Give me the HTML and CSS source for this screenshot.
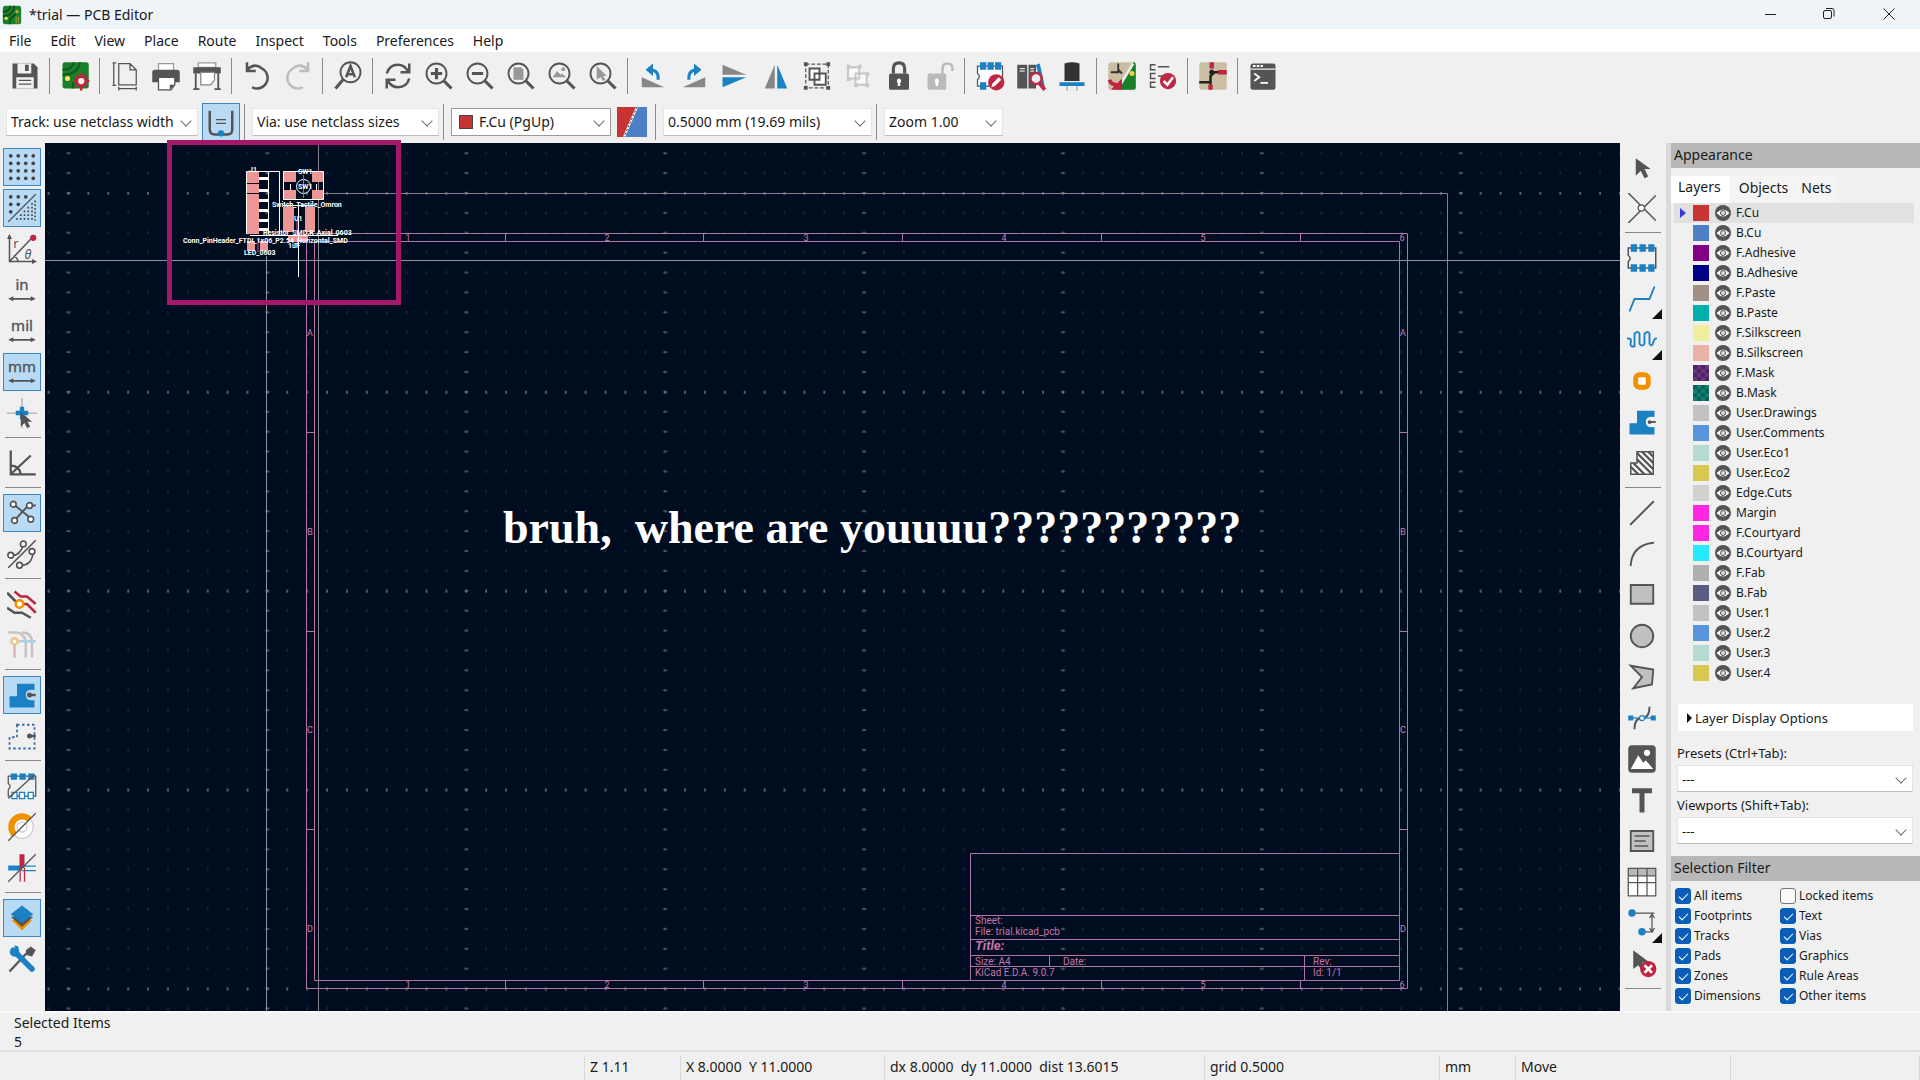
FILE: index.html
```html
<!DOCTYPE html>
<html lang="en">
<head>
    <meta charset="UTF-8">
    <meta name="viewport" content="width=device-width, initial-scale=1.0">
    <title>*trial — PCB Editor</title>
    <link rel="stylesheet" href="styles.css">
</head>
<body>
    <header class="titlebar">
        <svg class="app-icon" viewBox="0 0 24 24"><rect x="1" y="1" width="22" height="22" rx="3" fill="#1a7f2a"/><path d="M1 8c8 0 8-4 9-7M1 13c11 0 13-6 14-12M9 23c0-8 4-9 8-12" fill="none" stroke="#0c4d18" stroke-width="2"/><circle cx="5" cy="16" r="2" fill="#f3e33c"/><circle cx="18" cy="8" r="2" fill="#c9a53a"/><path d="M17 14v8M20 14v8" stroke="#c9a53a"/></svg>
        <h1>*trial — PCB Editor</h1>
        <div class="window-buttons">
            <button aria-label="Minimize"><svg viewBox="0 0 12 12"><path d="M0 6.5h11"/></svg></button>
            <button aria-label="Restore"><svg viewBox="0 0 12 12"><rect x=".5" y="2.5" width="8" height="8" rx="1.5"/><path d="M3 .5h6q2 0 2 2v6"/></svg></button>
            <button aria-label="Close"><svg viewBox="0 0 12 12"><path d="M.5.5l11 11M11.5.5l-11 11"/></svg></button>
        </div>
    </header>

    <nav class="menubar">
        <button>File</button>
        <button>Edit</button>
        <button>View</button>
        <button>Place</button>
        <button>Route</button>
        <button>Inspect</button>
        <button>Tools</button>
        <button>Preferences</button>
        <button>Help</button>
    </nav>

    <div class="toolbar">
        <button class="tool" title="Save"><svg viewBox="0 0 24 24"><path d="M2 2h17l3 3v17H2z" fill="#545454"/><path d="M6 2h11v8H6zM5 13h14v9H5z" fill="#f0f0f0"/><path d="M12 3h3v5h-3zM7 15h10v1H7zM7 18h10v1H7z" fill="#545454"/></svg></button>
        <span class="sep"></span>
        <button class="tool" title="Board Setup"><svg viewBox="0 0 24 24"><rect x="2" y="1" width="21" height="21" rx="2" fill="#1a7f2a"/><path d="M2 7c7 0 8-3 9-6M2 11c9 0 13-4 14-10M10 22c0-7 3-7 6-9" fill="none" stroke="#0c5a1b" stroke-width="1.5"/><circle cx="6" cy="14" r="2" fill="#ffea55"/><circle cx="17" cy="16" r="3.5" fill="#f0f0f0" stroke="#bf2641" stroke-width="2"/><path d="M17 9.500v3M17 19.500v4M10.500 16h3M20.500 16h3M12.500 11.500l2 2M19.500 18.500l2 2M21.500 11.500l-2 2M14.500 18.500l-2 2" stroke="#bf2641" stroke-width="2"/></svg></button>
        <span class="sep"></span>
        <button class="tool" title="Page Settings"><svg viewBox="0 0 24 24"><path d="M7 2h9l5 5v12H7zM16 2v5h5M3 1v18M2 1.5h3M2 19.5h3M7 22h14M7 20.5v3M21 20.5v3" fill="none" stroke="#545454"/></svg></button>
        <button class="tool" title="Print"><svg viewBox="0 0 24 24"><path d="M6 2h12v6H6z" fill="#fff" stroke="#999"/><path d="M3 7h18q2 0 2 2v8H1V9q0-2 2-2z" fill="#545454"/><path d="M6 13h13v6l-3 4H6z" fill="#fff" stroke="#545454"/><path d="M15 23v-4h4" fill="#545454"/></svg></button>
        <button class="tool" title="Plot"><svg viewBox="0 0 24 24"><path d="M5 1.5h14V5H5z" fill="#fff" stroke="#999"/><path d="M1 5h22v5H1z" fill="#545454"/><path d="M7 9h11v6l-3 4H7z" fill="#fff" stroke="#888"/><path d="M3 10v13M21 10v13M1 22.5h5M18 22.5h5" stroke="#545454" stroke-width="1.5"/></svg></button>
        <span class="sep"></span>
        <button class="tool" title="Undo"><svg viewBox="0 0 24 24"><path d="M4 7q6-6 12-1a8 8 0 0 1-8 15M4 1v7h7" fill="none" stroke="#545454" stroke-width="2"/></svg></button>
        <button class="tool" title="Redo" disabled><svg viewBox="0 0 24 24"><path d="M20 7q-6-6-12-1a8 8 0 0 0 8 15M20 1v7h-7" fill="none" stroke="#bdbdbd" stroke-width="2"/></svg></button>
        <span class="sep"></span>
        <button class="tool" title="Find"><svg viewBox="0 0 24 24"><circle cx="14" cy="9" r="8" fill="none" stroke="#545454" stroke-width="1.5"/><path d="M8 15l-6 7" stroke="#545454" stroke-width="2.5"/><path d="M10.5 13l3.500-9 3.500 9M12 10.5h4" fill="none" stroke="#545454" stroke-width="2"/></svg></button>
        <span class="sep"></span>
        <button class="tool" title="Refresh"><svg viewBox="0 0 24 24"><path d="M3 10q2-7 9-7 5 0 8 5M21 14q-2 7-9 7-5 0-8-5M21 2v7h-7M3 22v-7h7" fill="none" stroke="#545454" stroke-width="2"/></svg></button>
        <button class="tool" title="Zoom In"><svg viewBox="0 0 24 24"><circle cx="10" cy="10" r="8" fill="none" stroke="#545454" stroke-width="1.5"/><path d="M16 16l6 6" stroke="#545454" stroke-width="2.5"/><path d="M10 5.5v9M5.5 10h9" stroke="#545454" stroke-width="2.5"/></svg></button>
        <button class="tool" title="Zoom Out"><svg viewBox="0 0 24 24"><circle cx="10" cy="10" r="8" fill="none" stroke="#545454" stroke-width="1.5"/><path d="M16 16l6 6M5.5 10h9" stroke="#545454" stroke-width="2.5"/></svg></button>
        <button class="tool" title="Zoom to Fit"><svg viewBox="0 0 24 24"><circle cx="10" cy="10" r="8" fill="none" stroke="#545454" stroke-width="1.5"/><path d="M16 16l6 6" stroke="#545454" stroke-width="2.5"/><path d="M6 5h6l2 2v8H6z" fill="#999"/></svg></button>
        <button class="tool" title="Zoom to Objects"><svg viewBox="0 0 24 24"><circle cx="10" cy="10" r="8" fill="none" stroke="#545454" stroke-width="1.5"/><path d="M16 16l6 6" stroke="#545454" stroke-width="2.5"/><path d="M4.500 13l3.500-5 3 3 1-1 3.500 3z" fill="#999"/><circle cx="13" cy="6.5" r="1.5" fill="#999"/></svg></button>
        <button class="tool" title="Zoom to Selection"><svg viewBox="0 0 24 24"><circle cx="10" cy="10" r="8" fill="none" stroke="#545454" stroke-width="1.5"/><path d="M16 16l6 6" stroke="#545454" stroke-width="2.5"/><path d="M7 4v11l3-2 2 3 2-1-2-3h3z" fill="#999"/></svg></button>
        <span class="sep"></span>
        <button class="tool" title="Rotate Counterclockwise"><svg viewBox="0 0 24 24"><path d="M3 13l18 8H3z" fill="#878787"/><path d="M9 7q8 0 7 8" fill="none" stroke="#1a81c4" stroke-width="2.5"/><path d="M12 2v10L6 7z" fill="#1a81c4"/></svg></button>
        <button class="tool" title="Rotate Clockwise"><svg viewBox="0 0 24 24"><path d="M21 13v8H3z" fill="#878787"/><path d="M15 7q-8 0-7 8" fill="none" stroke="#1a81c4" stroke-width="2.5"/><path d="M12 2v10l6-5z" fill="#1a81c4"/></svg></button>
        <button class="tool" title="Mirror Vertically"><svg viewBox="0 0 24 24"><path d="M2 3l19 8H2z" fill="#878787"/><path d="M2 13h19L2 21z" fill="#1a81c4"/></svg></button>
        <button class="tool" title="Mirror Horizontally"><svg viewBox="0 0 24 24"><path d="M11 3v19H3z" fill="#878787"/><path d="M13 3l8 19h-8z" fill="#1a81c4"/></svg></button>
        <button class="tool" title="Group"><svg viewBox="0 0 24 24"><path d="M3 2.5h18v19H3z" fill="none" stroke="#545454" stroke-dasharray="3 1.5"/><path d="M1.5 1h3v3h-3zM19.5 1h3v3h-3zM1.5 20h3v3h-3zM19.5 20h3v3h-3z" fill="#545454"/><path d="M6 6h8v9H6zM10 10h9v9h-9z" fill="#fff" stroke="#545454" stroke-width="1.5"/></svg></button>
        <button class="tool" title="Ungroup" disabled><svg viewBox="0 0 24 24"><path d="M4 5h9v9H4zM10 10h9v9h-9z" fill="#f8f8f8" stroke="#c4c4c4" stroke-width="1.5"/><path d="M3 3h3v3H3zM12 3h3v3h-3zM18 9h3v3h-3zM3 13h3v3H3zM9 18h3v3H9zM18 18h3v3h-3z" fill="#c8c8c8"/></svg></button>
        <button class="tool" title="Lock"><svg viewBox="0 0 24 24"><rect x="4" y="10" width="16" height="13" rx="1.5" fill="#545454"/><path d="M7.5 10V6q0-4.500 4.500-4.500T16.5 6v4" fill="none" stroke="#545454" stroke-width="2.5"/><path d="M12 14a2 2 0 0 1 1 3.500V20h-2v-2.500a2 2 0 0 1 1-3.500z" fill="#fff"/></svg></button>
        <button class="tool" title="Unlock" disabled><svg viewBox="0 0 24 24"><rect x="2" y="10" width="15" height="13" rx="1.5" fill="#bababa"/><path d="M14 10V6q0-4 4-4t4 4v2" fill="none" stroke="#bababa" stroke-width="2"/><path d="M9.500 14a2 2 0 0 1 1 3.500V20h-2v-2.500a2 2 0 0 1 1-3.500z" fill="#fff"/></svg></button>
        <span class="sep"></span>
        <button class="tool" title="Footprint Editor"><svg viewBox="0 0 24 24"><path d="M2 4h20v16H2v-5q3-3 0-5z" fill="#fff" stroke="#545454"/><path d="M4 1h5v6H4zM10 1h5v6h-5zM16 1h5v6h-5zM4 17h5v6H4z" fill="#1a81c4"/><circle cx="17" cy="17" r="6.5" fill="#bf2641"/><path d="M13 21l1-3 5-5 2 2-5 5z" fill="#fff"/></svg></button>
        <button class="tool" title="Footprint Library Browser"><svg viewBox="0 0 24 24"><path d="M1 3h8v19H1zM10 3h6v19h-6z" fill="#545454"/><path d="M16 3l3-1 4 18-3 1z" fill="#1a81c4"/><path d="M3 6h4M3 8h4M11.5 6h3M11.5 8h3" stroke="#ddd"/><circle cx="16" cy="14" r="4.5" fill="#f0f0f0" stroke="#bf2641" stroke-width="2"/><path d="M19 18l4 5" stroke="#bf2641" stroke-width="3"/></svg></button>
        <button class="tool" title="3D Viewer"><svg viewBox="0 0 24 24"><path d="M6 2q6-2 12 0v14H6z" fill="#333"/><path d="M2 17h20v3H2z" fill="#1a81c4"/><path d="M8 20v4M16 20v4" stroke="#7fb7de"/></svg></button>
        <span class="sep"></span>
        <button class="tool" title="Update PCB from Schematic"><svg viewBox="0 0 24 24"><rect x="1" y="1" width="22" height="22" rx="2" fill="#cabfa3"/><path d="M21 1q2 0 2 2v18q0 2-2 2H9z" fill="#1a7f2a"/><path d="M3 9h6V2M9 7l3 3" stroke="#333" stroke-width="1.5" fill="none"/><path d="M21 2L10 20" stroke="#eee" stroke-width="2"/><circle cx="20" cy="10" r="2" fill="#f3d23c"/><path d="M2 15q1 4 6 4" fill="none" stroke="#bf2641" stroke-width="3"/><path d="M12 14v9H3z" fill="#bf2641"/></svg></button>
        <button class="tool" title="Design Rules Checker"><svg viewBox="0 0 24 24"><path d="M6 3H2v4h4M6 10H2v4h4M6 17H2v4h4M8 4.5h9M8 12h4" fill="none" stroke="#545454" stroke-width="1.2"/><circle cx="16" cy="16" r="6.5" fill="#bf2641"/><path d="M12.500 16l3 3 4.500-6" fill="none" stroke="#fff" stroke-width="2"/></svg></button>
        <span class="sep"></span>
        <button class="tool" title="Schematic Editor"><svg viewBox="0 0 24 24"><rect x="1" y="1" width="22" height="22" rx="2" fill="#cabfa3"/><path d="M1 17h9v-5l3-3h3M11 7v3M10 17v2" fill="none" stroke="#222" stroke-width="2"/><circle cx="11" cy="9" r="2" fill="#222"/><path d="M11 1v5M16 9h7M10 19v4" stroke="#bf2641" stroke-width="3.500"/></svg></button>
        <span class="sep"></span>
        <button class="tool" title="Scripting Console"><svg viewBox="0 0 24 24"><rect x="2" y="2" width="20" height="21" rx="2" fill="#545454"/><path d="M2 6.5h20" stroke="#eee"/><path d="M4 4h2M7 4h2M10 4h2" stroke="#fff" stroke-width="1.5"/><path d="M5 10l4 3-4 3M10 17.5h6" fill="none" stroke="#fff" stroke-width="1.5"/></svg></button>
    </div>

    <div class="toolbar options">
        <span class="combo track"><select aria-label="Track width"><option>Track: use netclass width</option></select></span>
        <button class="tool on" title="Use existing track width"><svg viewBox="0 0 24 24"><path d="M3 3v15q0 4 4 4h10q4 0 4-4V3" fill="none" stroke="#545454" stroke-width="2"/><path d="M8 10h8M8 13h8" stroke="#545454"/><circle cx="12" cy="21" r="2.5" fill="#1a81c4"/></svg></button>
        <span class="sep"></span>
        <span class="combo via"><select aria-label="Via size"><option>Via: use netclass sizes</option></select></span>
        <span class="sep"></span>
        <span class="combo layer"><i class="swatch"></i><select aria-label="Active layer"><option>F.Cu (PgUp)</option></select></span>
        <button class="layer-pair" title="Layer pair"><svg viewBox="0 0 30 30"><path d="M0 0h20L7 30H0z" fill="#c83434"/><path d="M20 0h10v30H7z" fill="#4d7fc4"/><path d="M20 0L7 30" stroke="#fff" stroke-width="2"/><path d="M20 0L7 30" stroke="#333" stroke-dasharray="2 2"/></svg></button>
        <span class="sep"></span>
        <span class="combo grid-size"><select aria-label="Grid"><option>0.5000 mm (19.69 mils)</option></select></span>
        <span class="sep"></span>
        <span class="combo zoom"><select aria-label="Zoom"><option>Zoom 1.00</option></select></span>
    </div>

    <main class="workspace">
        <aside class="toolbar vertical left">
            <button class="tool on" title="Show grid"><svg viewBox="0 0 24 24"><path d="M3 3h0M9 3h0M15 3h0M21 3h0M3 9h0M9 9h0M15 9h0M21 9h0M3 15h0M9 15h0M15 15h0M21 15h0M3 21h0M9 21h0M15 21h0M21 21h0" stroke="#444" stroke-width="3" stroke-linecap="round"/></svg></button>
            <button class="tool on" title="Grid overrides"><svg viewBox="0 0 24 24"><path d="M3 3h0M9 3h0M15 3h0M3 9h0M9 9h0M3 15h0" stroke="#444" stroke-width="3" stroke-linecap="round"/><path d="M1 23L23 1" stroke="#545454"/><path d="M20 8v14M17 11v11M14 14v8M11 17v5M8 20v2M22.5 6v16" stroke="#444" stroke-width="1.3" stroke-dasharray="1.3 1.7"/></svg></button>
            <button class="tool" title="Polar coordinates"><svg viewBox="0 0 24 24"><path d="M2 1v21h20M2 22L20 3M5 18q3 0 4 4" fill="none" stroke="#545454" stroke-width="1.2"/><path d="M0 4l2-4 2 4zM20 20l4 2-4 2z" fill="#545454"/><circle cx="21" cy="3" r="2.5" fill="#bf2641"/><text x="5" y="11" class="g-txt">r</text><text x="14" y="20" class="g-txt g-it">θ</text></svg></button>
            <button class="tool" title="Inches"><svg viewBox="0 0 24 24"><text x="12" y="12" class="u-txt">in</text><path d="M1 19l4-2v1.300h14V17l4 2-4 2v-1.300H5V21z" fill="#545454"/></svg></button>
            <button class="tool" title="Mils"><svg viewBox="0 0 24 24"><text x="12" y="12" class="u-txt">mil</text><path d="M1 19l4-2v1.300h14V17l4 2-4 2v-1.300H5V21z" fill="#545454"/></svg></button>
            <button class="tool on" title="Millimeters"><svg viewBox="0 0 24 24"><text x="12" y="12" class="u-txt">mm</text><path d="M1 19l4-2v1.300h14V17l4 2-4 2v-1.300H5V21z" fill="#545454"/></svg></button>
            <button class="tool" title="Full-window crosshairs"><svg viewBox="0 0 24 24"><path d="M12 0v24M0 12h24" stroke="#aaa"/><path d="M12 7v10M7 12h10" stroke="#1a81c4" stroke-width="3.500"/><path d="M11 11v12l3-3 2 4 2.500-1-2-4H20z" fill="#545454"/></svg></button>
            <span class="sep"></span>
            <button class="tool" title="Limit line angles"><svg viewBox="0 0 24 24"><path d="M3 2v19h20M3 21L19 6M3 14q7 0 8 7" fill="none" stroke="#545454" stroke-width="1.8"/></svg></button>
            <span class="sep"></span>
            <button class="tool on" title="Show ratsnest"><svg viewBox="0 0 24 24"><path d="M4 4l16 13M5 19L17 6h6" fill="none" stroke="#545454" stroke-width="1.5"/><g fill="#fff" stroke="#545454" stroke-width="1.3"><circle cx="5" cy="5" r="2.3"/><circle cx="18" cy="6" r="2.3"/><circle cx="6" cy="18" r="2.3"/><circle cx="19" cy="17" r="2.3"/></g></svg></button>
            <button class="tool" title="Curved ratsnest"><svg viewBox="0 0 24 24"><path d="M1 23L23 1M3 13q7 1 10-8M10 21q10 1 11-11" fill="none" stroke="#545454" stroke-width="1.3"/><g fill="#fff" stroke="#545454" stroke-width="1.3"><circle cx="3" cy="13" r="2.3"/><circle cx="13" cy="4" r="2.3"/><circle cx="10" cy="21" r="2.3"/><circle cx="20" cy="10" r="2.3"/></g></svg></button>
            <span class="sep"></span>
            <button class="tool" title="Contrast mode"><svg viewBox="0 0 24 24"><path d="M6 2l5 4h5l7 6M11 12h5l7 7" fill="none" stroke="#bf2641" stroke-width="2"/><path d="M0 3l9 9M0 15l6 4h6l7 4" fill="none" stroke="#545454" stroke-width="2"/><circle cx="10" cy="12" r="3" fill="#fff" stroke="#f29100" stroke-width="2"/></svg></button>
            <button class="tool" title="Net highlighting"><svg viewBox="0 0 24 24"><path d="M1 2h6q6 0 8 7v13M12 2q8 0 8 8v12" fill="none" stroke="#c4c4c4" stroke-width="2"/><path d="M7 9h16" stroke="#a9cfe8" stroke-width="2"/><path d="M6 11v11" stroke="#e3b0b6" stroke-width="2"/><circle cx="6" cy="9" r="2.5" fill="#fff" stroke="#f2c48d" stroke-width="2"/></svg></button>
            <span class="sep"></span>
            <button class="tool on" title="Show filled zones"><svg viewBox="0 0 24 24"><path d="M8 3h14v5q-7-1-7 4t7 4v6H2v-9h6z" fill="#1a81c4"/><path d="M17 12h6" stroke="#545454" stroke-width="2"/><circle cx="18" cy="12" r="2" fill="#545454"/></svg></button>
            <button class="tool" title="Show zone outlines"><svg viewBox="0 0 24 24"><path d="M8 3h14v19H2v-9h6z" fill="none" stroke="#3a6fa5" stroke-width="1.5" stroke-dasharray="2 2"/><path d="M17 12h6" stroke="#545454" stroke-width="2"/><circle cx="18" cy="12" r="2" fill="#545454"/></svg></button>
            <span class="sep"></span>
            <button class="tool" title="Sketch pads"><svg viewBox="0 0 24 24"><path d="M1 4h22v16H1v-5q3-3 0-5z" fill="none" stroke="#545454"/><path d="M3 2h5v5H3zM10 2h5v5h-5zM17 2h5v5h-5z" fill="#1a81c4"/><path d="M4 17h4v5H4zM10 17h4v5h-4zM17 17h4v5h-4z" fill="#fff" stroke="#1a81c4"/><path d="M1 22L22 3" stroke="#545454"/></svg></button>
            <button class="tool" title="Sketch vias"><svg viewBox="0 0 24 24"><circle cx="12" cy="12" r="9" fill="#fff" stroke="#ccc"/><path d="M6 18a8 8 0 0 1 12-12" fill="none" stroke="#f29100" stroke-width="5"/><circle cx="12" cy="12" r="4" fill="#fff" stroke="#ccc"/><path d="M1 23L23 1" stroke="#545454"/></svg></button>
            <button class="tool" title="Sketch tracks"><svg viewBox="0 0 24 24"><path d="M1 12h11" stroke="#1a81c4" stroke-width="4"/><path d="M12 12V1" stroke="#bf2641" stroke-width="4"/><path d="M12 10.5h11M12 14h11" stroke="#1a81c4"/><path d="M10.5 12v11M14 12v11" stroke="#bf2641"/><path d="M1 23L23 1" stroke="#545454"/></svg></button>
            <span class="sep"></span>
            <button class="tool on" title="Appearance manager"><svg viewBox="0 0 24 24"><path d="M4 14l8 8 8-8-8-4z" fill="#f29100"/><path d="M3 11l9 8 9-8z" fill="#545454"/><path d="M12 2l9 7-9 7-9-7z" fill="#1a81c4"/></svg></button>
            <button class="tool" title="Properties manager"><svg viewBox="0 0 24 24"><path d="M2 22L17 6" stroke="#545454" stroke-width="1.8"/><path d="M15 5l4-3 4 3-3 5-4-1z" fill="#545454"/><path d="M5 5l15 15" stroke="#1a81c4" stroke-width="4.500" stroke-linecap="round"/><path d="M2 5q0 6 6 5l2-3-1-5-3-1 1 5-2 1z" fill="#1a81c4"/></svg></button>
        </aside>

        <section class="board">
            <svg class="drawing">
                <defs>
                    <pattern id="minor" x="13.5" y="40" width="19.89" height="19.89" patternUnits="userSpaceOnUse"><path d="M10 8.5v3" stroke="#2b3846"/></pattern>
                    <pattern id="rows" x="13.5" y="-49" width="19.89" height="198.9" patternUnits="userSpaceOnUse"><path d="M10 98v3" stroke="#8a9499"/></pattern>
                    <pattern id="cols" x="-76" y="40" width="198.9" height="19.89" patternUnits="userSpaceOnUse"><path d="M97.5 10h4" stroke="#7b858c"/></pattern>
                </defs>
                <rect width="100%" height="100%" fill="url(#minor)"/>
                <rect width="100%" height="100%" fill="url(#rows)"/>
                <rect width="100%" height="100%" fill="url(#cols)"/>
                <g transform="translate(-45 -143)">
                    <path class="page" d="M318.5 143v900M318.5 193.5h1129v850"/>
                    <path class="cursor" d="M45 260.5h1900M266.5 256v800"/>
                    <g class="sheet">
                        <path d="M306.5 233.5h1101v755h-1101zM314.5 241.5h1085v739h-1085z"/>
                        <path d="M505.5 233v8M703.5 233v8M902.5 233v8M1101.5 233v8M1300.5 233v8M505.5 980v8M703.5 980v8M902.5 980v8M1101.5 980v8M1300.5 980v8"/>
                        <path d="M306 432.5h8M306 631.5h8M306 829.5h8M1399 432.5h8M1399 631.5h8M1399 829.5h8"/>
                        <path d="M970.5 980v-126.5h429M970 915.5h429M970 939.5h429M970 955.5h429M970 966.5h429M1049.5 955v11M1304.5 955v25"/>
                    </g>
                    <g class="ruler">
                        <text x="408" y="241">1</text><text x="607" y="241">2</text><text x="806" y="241">3</text><text x="1004" y="241">4</text><text x="1203" y="241">5</text><text x="1402" y="241">6</text>
                        <text x="408" y="988">1</text><text x="607" y="988">2</text><text x="806" y="988">3</text><text x="1004" y="988">4</text><text x="1203" y="988">5</text><text x="1402" y="988">6</text>
                        <text x="310" y="336">A</text><text x="310" y="535">B</text><text x="310" y="733">C</text><text x="310" y="932">D</text>
                        <text x="1403" y="336">A</text><text x="1403" y="535">B</text><text x="1403" y="733">C</text><text x="1403" y="932">D</text>
                    </g>
                    <g class="block">
                        <text x="975" y="924">Sheet:</text>
                        <text x="975" y="935">File: trial.kicad_pcb</text>
                        <text x="975" y="950" class="block-title">Title:</text>
                        <text x="975" y="965">Size: A4</text>
                        <text x="1063" y="965">Date:</text>
                        <text x="1313" y="965">Rev:</text>
                        <text x="975" y="976">KiCad E.D.A. 9.0.7</text>
                        <text x="1313" y="976">Id: 1/1</text>
                    </g>
                    <g class="parts">
                        <path class="pad" d="M247 172h12v62h-12zM284 172h12v10h-12zM312 172h12v10h-12zM284 190h12v9h-12zM312 190h12v9h-12zM283 207h11v25h-11zM305 207h10v25h-10zM247 241h8v10h-8zM260 241h8v10h-8zM288 236h20v6h-20z"/>
                        <path d="M247 183.5h12M247 193.5h12" stroke="#001023"/>
                        <path d="M259 177h9v3h-9zM259 189h9v3h-9zM259 199h9v3h-9zM259 209h9v3h-9zM259 219h9v3h-9zM259 228h9v3h-9z" fill="#fff"/>
                        <path class="silk" d="M246.5 234v-62.5h33v62.5M268.5 172v62M283.5 171.5h40v28h-40zM290.5 184v6M316.5 184v6M283 205.5h32M250 235.5h88M298.5 205v72"/>
                        <circle class="silk" cx="303.5" cy="186.5" r="7"/>
                        <path d="M303.5 175v23M297 220v14M258 240v12" stroke="#c44fc4"/>
                        <text x="249" y="172">J1</text>
                        <text x="298" y="174">SW1</text>
                        <text x="298" y="189">SW1</text>
                        <text x="272" y="207">Switch_Tactile_Omron</text>
                        <text x="294" y="221">U1</text>
                        <text x="263" y="235">Resistor_SMD:R_Axial_0603</text>
                        <text x="183" y="243">Conn_PinHeader_FTDI_1x06_P2.54_Horizontal_SMD</text>
                        <text x="288" y="248">1uF</text>
                        <text x="244" y="255">LED_0603</text>
                    </g>
                    <text class="note" x="503" y="543">bruh,  where are youuuu???????????</text>
                </g>
            </svg>
            <div class="marker"></div>
        </section>

        <aside class="toolbar vertical right">
            <button class="tool" title="Select"><svg viewBox="0 0 24 24"><path d="M7 5v14l4-4 3 6 3-1.500-3-6h5z" fill="#545454"/></svg></button>
            <button class="tool" title="Local ratsnest"><svg viewBox="0 0 24 24"><path d="M1 0l22 22M23 2L1 24" stroke="#545454" stroke-width="1.2"/><circle cx="11.5" cy="12" r="2.5" fill="#fff" stroke="#545454"/></svg></button>
            <span class="sep"></span>
            <button class="tool" title="Place footprints"><svg viewBox="0 0 24 24"><path d="M1 4h22v16H1v-5q3-3 0-5z" fill="none" stroke="#545454" stroke-width="1.2"/><path d="M3 1h5v6H3zM10 1h5v6h-5zM17 1h5v6h-5zM3 17h5v6H3zM10 17h5v6h-5zM17 17h5v6h-5z" fill="#1a81c4"/></svg></button>
            <button class="tool more" title="Route tracks"><svg viewBox="0 0 24 24"><path d="M2 22l4-10h12l4-10" fill="none" stroke="#1a81c4" stroke-width="1.5"/></svg></button>
            <button class="tool more" title="Tune length"><svg viewBox="0 0 24 24"><path d="M0 11q4-1 3 3t3 3V7q3-3 4 0v8q2 3 4 0V7q3-3 4 0v8q2 3 3-1t3-3" fill="none" stroke="#1a81c4" stroke-width="1.5"/></svg></button>
            <button class="tool" title="Place vias"><svg viewBox="0 0 24 24"><rect x="7" y="7" width="10" height="10" rx="3" fill="#fff" stroke="#f29100" stroke-width="4"/></svg></button>
            <button class="tool" title="Draw filled zones"><svg viewBox="0 0 24 24"><path d="M8 3h14v5q-7-1-7 4t7 4v6H2v-9h6z" fill="#1a81c4"/><path d="M17 12h6" stroke="#545454" stroke-width="1.5"/><circle cx="18" cy="12" r="1.5" fill="#545454"/></svg></button>
            <button class="tool" title="Draw rule areas"><svg viewBox="0 0 24 24"><path d="M8 3h13v18H3v-9h5z" fill="#f8f8f8" stroke="#545454" stroke-width="1.2"/><path d="M8 4l13 13M12 3l9 9M17 3l4 4M8 9l12 12M5 12l9 9M3 15l6 6" stroke="#545454" stroke-width="1.8"/></svg></button>
            <span class="sep"></span>
            <button class="tool" title="Draw lines"><svg viewBox="0 0 24 24"><path d="M3 21L21 3" stroke="#545454" stroke-width="1.5" stroke-linecap="round"/></svg></button>
            <button class="tool" title="Draw arcs"><svg viewBox="0 0 24 24"><path d="M3 21Q4 5 21 3" fill="none" stroke="#545454" stroke-width="1.5" stroke-linecap="round"/></svg></button>
            <button class="tool" title="Draw rectangles"><svg viewBox="0 0 24 24"><path d="M3 4h18v15H3z" fill="#c0c0c0" stroke="#545454" stroke-width="1.5"/></svg></button>
            <button class="tool" title="Draw circles"><svg viewBox="0 0 24 24"><circle cx="12" cy="12" r="9" fill="#c0c0c0" stroke="#545454" stroke-width="1.5"/></svg></button>
            <button class="tool" title="Draw polygons"><svg viewBox="0 0 24 24"><path d="M3 3l18 3-1 12-15 3 7-9z" fill="#c0c0c0" stroke="#545454" stroke-width="1.5"/></svg></button>
            <button class="tool" title="Draw bezier curve"><svg viewBox="0 0 24 24"><path d="M6 21q0-9 6-9t6-9" fill="none" stroke="#545454" stroke-width="1.5"/><path d="M3 12h18" stroke="#1a81c4"/><path d="M1 10h4v4H1zM19 10h4v4h-4z" fill="#1a81c4"/><circle cx="12" cy="12" r="2" fill="#fff" stroke="#1a81c4"/></svg></button>
            <button class="tool" title="Place reference images"><svg viewBox="0 0 24 24"><rect x="1" y="1" width="22" height="22" rx="3" fill="#545454"/><path d="M3 20l6-11 4 6 2-2 6 7z" fill="#fff"/><circle cx="16" cy="7" r="2.5" fill="#fff"/></svg></button>
            <button class="tool" title="Draw text"><svg viewBox="0 0 24 24"><path d="M4 4.500h16M12 4v18" fill="none" stroke="#545454" stroke-width="4"/></svg></button>
            <button class="tool" title="Draw text boxes"><svg viewBox="0 0 24 24"><path d="M3 4h18v16H3z" fill="#c0c0c0" stroke="#545454" stroke-width="1.5"/><path d="M6 8h12M6 12h9M6 16h11" stroke="#545454" stroke-width="1.3"/></svg></button>
            <button class="tool" title="Draw tables"><svg viewBox="0 0 24 24"><path d="M1 1h22v22H1z" fill="#fff"/><path d="M1 1h22v6H1z" fill="#b8b8b8"/><path d="M1 1h22v22H1zM8.5 1v22M16 1v22M1 12.5h22M1 7h22" fill="none" stroke="#545454"/></svg></button>
            <button class="tool more" title="Draw dimensions"><svg viewBox="0 0 24 24"><path d="M4 4h18M12 19h9M20 6v12M18 8l2-3 2 3M18 16l2 3 2-3" fill="none" stroke="#545454"/><circle cx="4" cy="4" r="3" fill="#1a81c4"/><circle cx="12" cy="19" r="3" fill="#1a81c4"/></svg></button>
            <button class="tool" title="Delete"><svg viewBox="0 0 24 24"><path d="M5 1v15l4-3 4 6 3-2-4-6 5-1z" fill="#545454"/><circle cx="17" cy="16" r="6.5" fill="#bf2641"/><path d="M14 13l6 6M20 13l-6 6" stroke="#fff" stroke-width="2"/></svg></button>
            <span class="sep"></span>
        </aside>

        <aside class="panel">
            <h2>Appearance</h2>
            <div class="tabs" role="tablist">
                <button role="tab" aria-selected="true" class="active">Layers</button>
                <button role="tab">Objects</button>
                <button role="tab">Nets</button>
            </div>
            <ul id="layers"></ul>
            <button class="display-options">Layer Display Options</button>
            <div class="presets">
                <label for="presets">Presets (Ctrl+Tab):</label>
                <span class="combo"><select id="presets"><option>---</option></select></span>
                <label for="viewports">Viewports (Shift+Tab):</label>
                <span class="combo"><select id="viewports"><option>---</option></select></span>
            </div>
            <h2>Selection Filter</h2>
            <div class="filters">
                <label><input type="checkbox" checked>All items</label>
                <label><input type="checkbox">Locked items</label>
                <label><input type="checkbox" checked>Footprints</label>
                <label><input type="checkbox" checked>Text</label>
                <label><input type="checkbox" checked>Tracks</label>
                <label><input type="checkbox" checked>Vias</label>
                <label><input type="checkbox" checked>Pads</label>
                <label><input type="checkbox" checked>Graphics</label>
                <label><input type="checkbox" checked>Zones</label>
                <label><input type="checkbox" checked>Rule Areas</label>
                <label><input type="checkbox" checked>Dimensions</label>
                <label><input type="checkbox" checked>Other items</label>
            </div>
        </aside>
    </main>

    <section class="message">
        <p>Selected Items</p>
        <p>5</p>
    </section>

    <footer class="statusbar">
        <span></span>
        <span>Z 1.11</span>
        <span>X 8.0000&nbsp; Y 11.0000</span>
        <span>dx 8.0000&nbsp; dy 11.0000&nbsp; dist 13.6015</span>
        <span>grid 0.5000</span>
        <span>mm</span>
        <span>Move</span>
        <span></span>
    </footer>

    <script src="layers.js"></script>
</body>
</html>
```
FILE: styles.css
```css
* {
    box-sizing: border-box;
}

body {
    margin: 0;
    min-height: 100vh;
    display: flex;
    flex-direction: column;
    background: #f0f0f0;
    color: #1a1a1a;
    font-family: "Noto Sans", "Open Sans", sans-serif;
    font-size: 14px;
    line-height: 20px;
}

button,
select {
    font: inherit;
    color: inherit;
    border: 0;
    padding: 0;
    background: none;
}

h1,
h2,
p,
ul {
    margin: 0;
    padding: 0;
    font-size: 14px;
    font-weight: normal;
}

/* title bar and menus */
.titlebar {
    height: 29px;
    display: flex;
    align-items: center;
    padding-left: 2px;
    background: #eff4f9;
}

.app-icon {
    width: 20px;
    height: 20px;
    margin-right: 7px;
}

.window-buttons {
    margin-left: auto;
    display: flex;
    align-self: stretch;
}

.window-buttons button {
    width: 58px;
}

.window-buttons button:last-child {
    width: 62px;
}

.window-buttons svg {
    width: 12px;
    height: 12px;
    fill: none;
    stroke: #222;
}

.menubar {
    height: 23px;
    display: flex;
    gap: 19px;
    padding: 0 9px;
    background: #fff;
}

/* toolbars */
.toolbar {
    display: flex;
    align-items: center;
    height: 48px;
    padding-left: 4px;
}

.tool {
    width: 38px;
    height: 38px;
    margin: 0 1px 0 2px;
    flex: none;
    display: grid;
    place-items: center;
    position: relative;
}

.tool svg {
    width: 30px;
    height: 30px;
}

.tool.on {
    background: #b9daf5;
    border: 1px solid #3c86c4;
}

.sep {
    width: 1px;
    height: 36px;
    margin: 0 4px;
    flex: none;
    background: #8a8a8a;
}

.options {
    height: 43px;
    padding-left: 6px;
}

.options .tool {
    margin: 0 0 0 4px;
}

.options .sep {
    margin: 0 7px 0 4px;
}

.combo {
    display: block;
    position: relative;
    height: 28px;
    background: #fff;
    border: 1px solid #e4e4e4;
    border-bottom-color: #bdbdbd;
}

.combo select {
    appearance: none;
    width: 100%;
    height: 100%;
    padding: 0 24px 0 4px;
    outline: 0;
}

.combo::after {
    content: "";
    position: absolute;
    right: 7px;
    top: 8px;
    width: 7px;
    height: 7px;
    border: solid #707070;
    border-width: 0 1px 1px 0;
    transform: rotate(45deg);
    pointer-events: none;
}

.track {
    width: 192px;
}

.via {
    width: 187px;
}

.layer {
    width: 160px;
    border-color: #9a9a9a;
}

.layer select {
    padding-left: 27px;
}

.layer .swatch {
    position: absolute;
    left: 7px;
    top: 6px;
    width: 14px;
    height: 14px;
    background: #c83434;
    border: 1px solid #444;
}

.layer-pair {
    width: 30px;
    height: 30px;
    margin: 0 4px 0 6px;
}

.layer-pair svg {
    display: block;
}

.grid-size {
    width: 209px;
}

.zoom {
    width: 119px;
}

/* board area */
.workspace {
    flex: 1;
    display: grid;
    grid-template-columns: 45px 1fr 46px 254px;
}

.vertical {
    flex-direction: column;
    height: auto;
    padding: 3px 0 0;
}

.vertical .tool {
    margin: 2px 0 1px;
}

.left .tool {
    margin-right: 1px;
}

.right .tool {
    margin-right: 2px;
}

.vertical .sep {
    width: 36px;
    height: 1px;
    margin: 4px 0;
}

.more::after {
    content: "";
    position: absolute;
    right: -1px;
    bottom: -1px;
    border: 5px solid #111;
    border-top-color: transparent;
    border-left-color: transparent;
}

.u-txt {
    font-size: 12px;
    fill: #545454;
    stroke: #545454;
    stroke-width: 0.3px;
    text-anchor: middle;
}

.g-txt {
    font-size: 10px;
    fill: #545454;
}

.g-it {
    font-style: italic;
}

.board {
    position: relative;
    background: #000d21;
}

.drawing {
    display: block;
    width: 100%;
    height: 100%;
}

.drawing text {
    font-family: Roboto, sans-serif;
    font-size: 10px;
}

.page {
    fill: none;
    stroke: #84808c;
}

.cursor {
    fill: none;
    stroke: #8b959b;
}

.sheet path {
    fill: none;
    stroke: #b273a6;
}

.drawing .ruler text {
    fill: #c87fb8;
    font-size: 9px;
    text-anchor: middle;
}

.block text {
    fill: #c872ab;
}

.drawing .block-title {
    font-size: 13px;
    font-weight: bold;
    font-style: italic;
}

.parts .pad {
    fill: #ee9696;
}

.silk {
    fill: none;
    stroke: #fff;
}

.drawing .parts text {
    fill: #fff;
    font-size: 7px;
    font-weight: bold;
}

.drawing .note {
    fill: #fff;
    font-family: "Liberation Serif", serif;
    font-size: 46px;
    font-weight: bold;
    white-space: pre;
}

.marker {
    position: absolute;
    left: 122px;
    top: -3px;
    width: 234px;
    height: 165px;
    border: 5px solid #a3186b;
}

/* side panel */
.panel {
    border-left: 5px solid #dadada;
    font-size: 13px;
}

.panel h2 {
    height: 25px;
    padding: 2px 3px;
    background: #b8b8b8;
}

.tabs {
    display: flex;
    padding-top: 8px;
    height: 35px;
    align-items: flex-start;
    font-size: 14px;
}

.tabs button {
    padding: 2px 4px 4px 9px;
    background: #f4f4f4;
}

.tabs .active {
    background: #fff;
    padding: 1px 9px 6px 7px;
}

#layers {
    list-style: none;
    padding: 0 6px 0 3px;
    font-size: 12px;
}

#layers li {
    display: flex;
    align-items: center;
    height: 20px;
    padding-left: 6px;
}

#layers li.current {
    background: #e1e1e1;
}

#layers li::before {
    content: "";
    width: 13px;
}

#layers li.current::before {
    width: 0;
    margin-right: 7px;
    border: solid transparent;
    border-width: 5px 0 5px 6px;
    border-left-color: #3b36dc;
}

#layers .swatch {
    width: 16px;
    height: 16px;
    margin-right: 6px;
}

#layers svg {
    width: 16px;
    height: 16px;
    margin-right: 5px;
}

.display-options {
    display: flex;
    align-items: center;
    width: calc(100% - 14px);
    height: 27px;
    margin: 21px 7px 12px;
    padding-left: 9px;
    background: #fff;
}

.display-options::before {
    content: "";
    margin-right: 3px;
    border: solid transparent;
    border-width: 5px 0 5px 5px;
    border-left-color: #111;
}

.presets {
    padding: 0 7px 0 6px;
    margin-bottom: 12px;
}

.presets label {
    display: block;
    height: 22px;
}

.presets .combo {
    height: 27px;
    margin-bottom: 3px;
}

.filters {
    display: grid;
    grid-template-columns: 105px 1fr;
    padding: 5px 4px;
    font-size: 12px;
}

.filters label {
    display: flex;
    align-items: center;
    gap: 3px;
    height: 20px;
    white-space: nowrap;
}

.filters input {
    appearance: none;
    width: 16px;
    height: 16px;
    margin: 0;
    border: 1px solid #777;
    border-radius: 3px;
    background: #f8f8f8;
    display: grid;
    place-items: center;
}

.filters input:checked {
    background: #0a5db8;
    border-color: #0a5db8;
}

.filters input:checked::after {
    content: "";
    width: 8px;
    height: 4px;
    margin-bottom: 2px;
    border: solid #fff;
    border-width: 0 0 1px 1px;
    transform: rotate(-45deg);
}

/* bottom */
.message {
    height: 41px;
    padding: 0 14px;
    border-top: 2px solid #f8f8f8;
    border-bottom: 2px solid #dfdfdf;
    line-height: 19px;
}

.statusbar {
    display: grid;
    grid-template-columns: 585fr 96fr 204fr 320fr 235fr 76fr 215fr 189fr;
    height: 28px;
    padding-top: 3px;
}

.statusbar span {
    padding: 2px 5px;
    border-right: 1px solid #dadada;
    white-space: nowrap;
}
```
FILE: layers.js
```js
const layers = [
    ["F.Cu", "#c83434"],
    ["B.Cu", "#4d7fc4"],
    ["F.Adhesive", "#840084"],
    ["B.Adhesive", "#000084"],
    ["F.Paste", "#a09088"],
    ["B.Paste", "#00aeae"],
    ["F.Silkscreen", "#eeee9b"],
    ["B.Silkscreen", "#e8b2a7"],
    ["F.Mask", "repeating-conic-gradient(#6a3580 0 25%, #4e2463 0 50%) 0 0 / 8px 8px"],
    ["B.Mask", "repeating-conic-gradient(#12806f 0 25%, #06625a 0 50%) 0 0 / 8px 8px"],
    ["User.Drawings", "#c2c2c2"],
    ["User.Comments", "#5994dc"],
    ["User.Eco1", "#b4dbd2"],
    ["User.Eco2", "#d8c852"],
    ["Edge.Cuts", "#d0d2cd"],
    ["Margin", "#ff26e2"],
    ["F.Courtyard", "#ff26e2"],
    ["B.Courtyard", "#26e9ff"],
    ["F.Fab", "#afafaf"],
    ["B.Fab", "#585d84"],
    ["User.1", "#c2c2c2"],
    ["User.2", "#5994dc"],
    ["User.3", "#b4dbd2"],
    ["User.4", "#d8c852"]
];

const eye = '<svg viewBox="0 0 16 16"><circle cx="8" cy="8" r="8" fill="#545454"/>' +
    '<path d="M1.5 8q6.500-7 13 0-6.500 7-13 0z" fill="#fff"/>' +
    '<circle cx="8" cy="8" r="2.5" fill="#ddd" stroke="#545454"/></svg>';

const list = document.querySelector('#layers');
layers.forEach(([name, color], i) => {
    list.innerHTML += `
        <li class="${i === 0 ? 'current' : ''}">
            <i class="swatch" style="background: ${color}"></i>
            ${eye}
            <span>${name}</span>
        </li>
    `;
});
```
